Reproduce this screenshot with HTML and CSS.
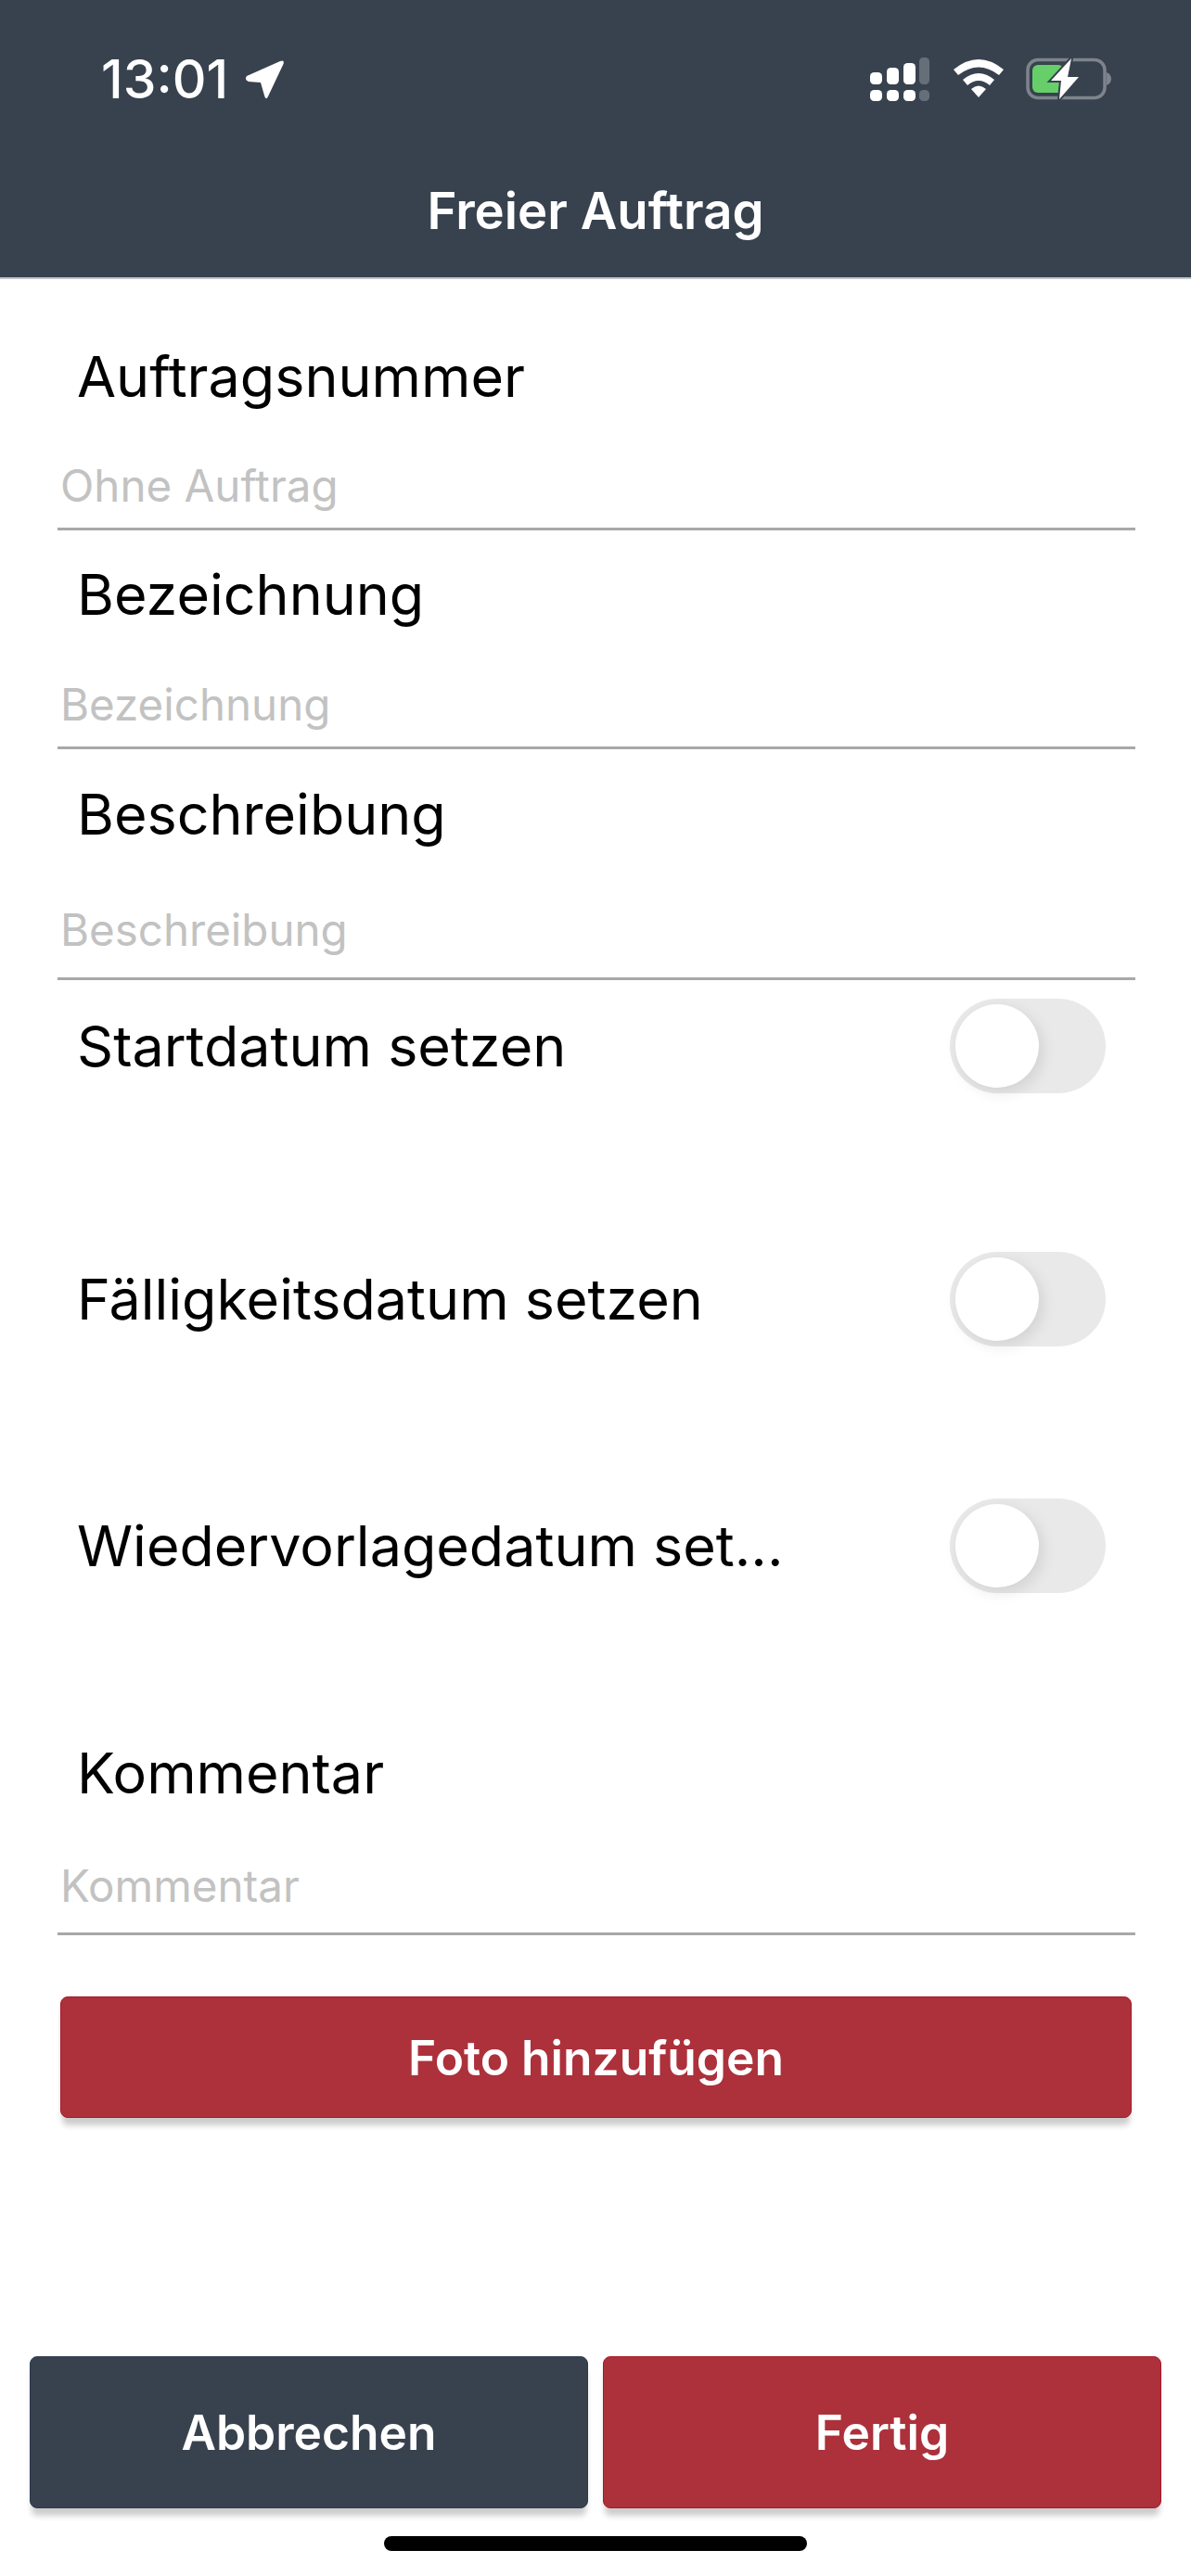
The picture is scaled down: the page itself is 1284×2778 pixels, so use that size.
FILE: index.html
```html
<!DOCTYPE html>
<html lang="de">
<head>
  <meta charset="UTF-8">
  <title>Freier Auftrag</title>
  <link rel="stylesheet" href="styles.css">
</head>
<body>

  <header class="topbar">
    <div class="status">
      <div class="status-left">
        <span class="time">13:01</span>
        <svg class="arrow" width="44" height="44" viewBox="0 0 44 44">
          <path d="M3 18 L39 2 Q44 0 42.500 5 L26 40 Q23.500 45 22 39 L18 25 L5 24 Q0 22 3 18 Z" fill="#fff"/>
        </svg>
      </div>
      <div class="status-right">
        <svg width="66" height="48" viewBox="0 0 66 48">
          <rect x="0" y="16" width="13" height="13" rx="4.500" fill="#fff"/>
          <rect x="18" y="11" width="13" height="18" rx="4.500" fill="#fff"/>
          <rect x="36" y="6" width="13" height="23" rx="4.500" fill="#fff"/>
          <rect x="53" y="0" width="11" height="29" rx="4.500" fill="#666e78"/>
          <rect x="0" y="35" width="13" height="12" rx="4.500" fill="#fff"/>
          <rect x="18" y="35" width="13" height="12" rx="4.500" fill="#fff"/>
          <rect x="36" y="35" width="13" height="12" rx="4.500" fill="#fff"/>
          <rect x="53" y="35" width="11" height="12" rx="4.500" fill="#666e78"/>
        </svg>
        <svg width="56" height="44" viewBox="0 0 56 44">
          <path d="M1 13 Q28 -9 55 13 L50 19 Q28 2 6 19 Z" fill="#fff"/>
          <path d="M11 24 Q28 10 45 24 L40 30 Q28 20 16 30 Z" fill="#fff"/>
          <path d="M20 34 Q28 27 36 34 L28 43 Z" fill="#fff"/>
        </svg>
        <svg width="92" height="46" viewBox="0 0 92 46">
          <rect x="2" y="2.500" width="83" height="41" rx="11" fill="none" stroke="#7d848c" stroke-width="3.500"/>
          <path d="M87 16 Q92 18 92 23 Q92 28 87 30 Z" fill="#7d848c"/>
          <rect x="7" y="8" width="34" height="30" rx="6" fill="#66cf69"/>
          <path class="bolt" d="M49 1 L27 25 L38 25 L36 45 L57 21 L45 21 Z"/>
        </svg>
      </div>
    </div>
    <h1 class="title">Freier Auftrag</h1>
  </header>

  <main class="form">
    <div class="field field-order">
      <div class="field-label">Auftragsnummer</div>
      <div class="field-input">Ohne Auftrag</div>
    </div>
    <div class="field field-name">
      <div class="field-label">Bezeichnung</div>
      <div class="field-input">Bezeichnung</div>
    </div>
    <div class="field field-desc">
      <div class="field-label">Beschreibung</div>
      <div class="field-input">Beschreibung</div>
    </div>

    <div class="switch-row row-start">
      <span class="field-label">Startdatum setzen</span>
      <span class="toggle"></span>
    </div>
    <div class="switch-row row-due">
      <span class="field-label">Fälligkeitsdatum setzen</span>
      <span class="toggle"></span>
    </div>
    <div class="switch-row row-resub">
      <span class="field-label">Wiedervorlagedatum set...</span>
      <span class="toggle"></span>
    </div>

    <div class="field field-comment">
      <div class="field-label">Kommentar</div>
      <div class="field-input">Kommentar</div>
    </div>

    <button class="btn btn-red btn-photo">Foto hinzufügen</button>

    <div class="actions">
      <button class="btn btn-dark">Abbrechen</button>
      <button class="btn btn-red">Fertig</button>
    </div>
    <div class="home-bar"></div>
  </main>

</body>
</html>
```

FILE: styles.css
```css
* {
  box-sizing: border-box;
}

body {
  margin: 0;
  height: 100vh;
  display: flex;
  flex-direction: column;
  background: #fff;
  font-family: Inter, "Liberation Sans", sans-serif;
  color: #000;
  overflow: hidden;
}

.topbar {
  height: 301px;
  flex: none;
  background: #38424f;
  border-bottom: 2px solid #c4c6c8;
  color: #fff;
}

.status {
  height: 195px;
  padding: 62px 86px 0 109px;
  display: flex;
  justify-content: space-between;
  align-items: flex-start;
}

.status-left {
  display: flex;
  align-items: center;
  gap: 17px;
}

.time {
  font-size: 57px;
  line-height: 48px;
  font-weight: 500;
}

.status-right {
  display: flex;
  align-items: flex-start;
  gap: 23px;
}

.bolt {
  fill: #fff;
  stroke: #38424f;
  stroke-width: 4px;
  paint-order: stroke;
}

.title {
  margin: 0;
  text-align: center;
  font-size: 54.500px;
  line-height: 64px;
  font-weight: 600;
}

.form {
  flex: 1;
  display: flex;
  flex-direction: column;
}

.field {
  margin: 0 60px 0 62px;
  border-bottom: 3px solid #a8a8a8;
}

.field-label {
  font-size: 61px;
  line-height: 70px;
  padding-left: 21px;
  white-space: nowrap;
}

.field-input {
  font-size: 47.500px;
  line-height: 60px;
  color: #c2c2c2;
  padding-left: 3px;
}

.field-order { padding-top: 70px; padding-bottom: 15px; }
.field-order .field-input { margin-top: 53px; }

.field-name { padding-top: 34px; padding-bottom: 15px; }
.field-name .field-input { margin-top: 54px; }

.field-desc { padding-top: 35px; padding-bottom: 21px; }
.field-desc .field-input { margin-top: 60px; }

.switch-row {
  margin: 0 92px 0 62px;
  height: 102px;
  display: flex;
  align-items: center;
  justify-content: space-between;
}

.row-start { margin-top: 20px; }
.row-due { margin-top: 171px; }
.row-resub { margin-top: 164px; }

.toggle {
  position: relative;
  width: 168px;
  height: 102px;
  border-radius: 51px;
  background: #e9e9e9;
}

.toggle::after {
  content: "";
  position: absolute;
  left: 6px;
  top: 6px;
  width: 90px;
  height: 90px;
  border-radius: 50%;
  background: #fff;
  box-shadow: 4px 5px 16px rgba(0, 0, 0, 0.1);
}

.field-comment { padding-top: 159px; padding-bottom: 20px; }
.field-comment .field-input { margin-top: 57px; }

.btn {
  border: none;
  border-radius: 8px;
  color: #fff;
  font-family: inherit;
  font-size: 51.500px;
  font-weight: 600;
  box-shadow: 0 10px 6px -2px rgba(0, 0, 0, 0.2);
}

.btn-red {
  background: #ac313b;
  border: 1px solid #a81828;
}

.btn-dark {
  background: #38424f;
  border: 1px solid #2c3a4e;
}

.btn-photo {
  margin: 66px 64px 0 65px;
  height: 131px;
  flex: none;
}

.actions {
  margin-top: auto;
  padding: 0 32px;
  display: flex;
  gap: 16px;
}

.actions .btn {
  flex: 1;
  height: 164px;
}

.home-bar {
  width: 456px;
  height: 16px;
  margin: 30px auto 27px;
  border-radius: 8px;
  background: #000;
}
```
